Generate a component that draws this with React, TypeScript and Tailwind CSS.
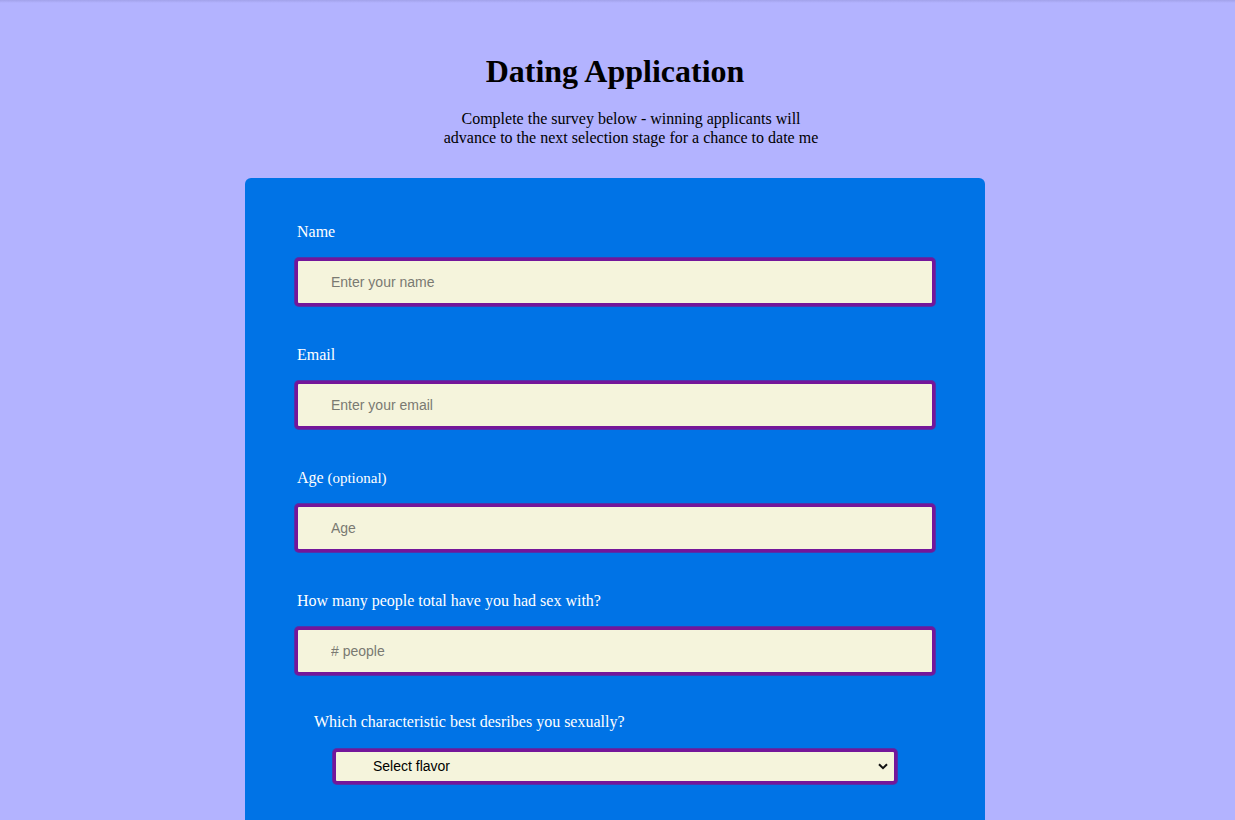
import React from "react";

const serif = { fontFamily: '"Liberation Serif", "Times New Roman", serif' };
const sans = { fontFamily: '"Liberation Sans", Arial, sans-serif' };

function Field({ label, extra, placeholder }: { label: string; extra?: string; placeholder: string }) {
  return (
    <div className="flex flex-col">
      <label className="pl-[2px] text-[16px] leading-[18px] text-white">
        {label}
        {extra && <span className="text-[15px]"> {extra}</span>}
      </label>
      <input
        placeholder={placeholder}
        className="mt-[17px] h-[48px] w-full rounded-[4px] border-[3px] border-[#74169a] bg-[#f5f4dc] pl-[33px] text-[14px] text-black shadow-[0_0_0_1px_#5331aa] outline-none placeholder:text-[#7a7a72]"
        style={sans}
      />
    </div>
  );
}

export default function App() {
  return (
    <div className="min-h-screen bg-[#b3b3ff]" style={serif}>
      <div className="h-[3px] bg-gradient-to-b from-[#a2a2ea] to-[#b3b3ff]" />
      <div className="flex flex-col items-center pt-[50px] pr-[5px]">
        <h1 className="text-[32px] leading-[37px] font-bold text-black">Dating Application</h1>
        <p className="mt-[19px] ml-[32px] w-[385px] text-center text-[16px] leading-[19px] text-black">
          Complete the survey below - winning applicants will advance to the next selection stage for a chance to date me
        </p>
        <div className="mt-[31px] w-[740px] rounded-[6px] bg-[#0073e6] px-[50px] pt-[45px] pb-[60px]">
          <div className="flex flex-col gap-[40px]">
            <Field label="Name" placeholder="Enter your name" />
            <Field label="Email" placeholder="Enter your email" />
            <Field label="Age" extra="(optional)" placeholder="Age" />
            <Field label="How many people total have you had sex with?" placeholder="# people" />
            <div className="-mt-[2px] flex flex-col">
              <label className="pl-[19px] text-[16px] leading-[18px] text-white">
                Which characteristic best desribes you sexually?
              </label>
              <div className="relative mx-auto mt-[18px] w-[564px]">
                <select
                  className="h-[35px] w-full appearance-none rounded-[4px] border-[3px] border-[#74169a] bg-[#f5f4dc] pl-[37px] text-[14px] text-black shadow-[0_0_0_1px_#5331aa] outline-none"
                  style={sans}
                  defaultValue=""
                >
                  <option value="">Select flavor</option>
                </select>
                <svg
                  className="pointer-events-none absolute right-[9px] top-[14px]"
                  width="10"
                  height="7"
                  viewBox="0 0 10 7"
                >
                  <path d="M1 1.2 L5 5.2 L9 1.2" fill="none" stroke="#111" strokeWidth="2" />
                </svg>
              </div>
            </div>
          </div>
        </div>
      </div>
    </div>
  );
}
